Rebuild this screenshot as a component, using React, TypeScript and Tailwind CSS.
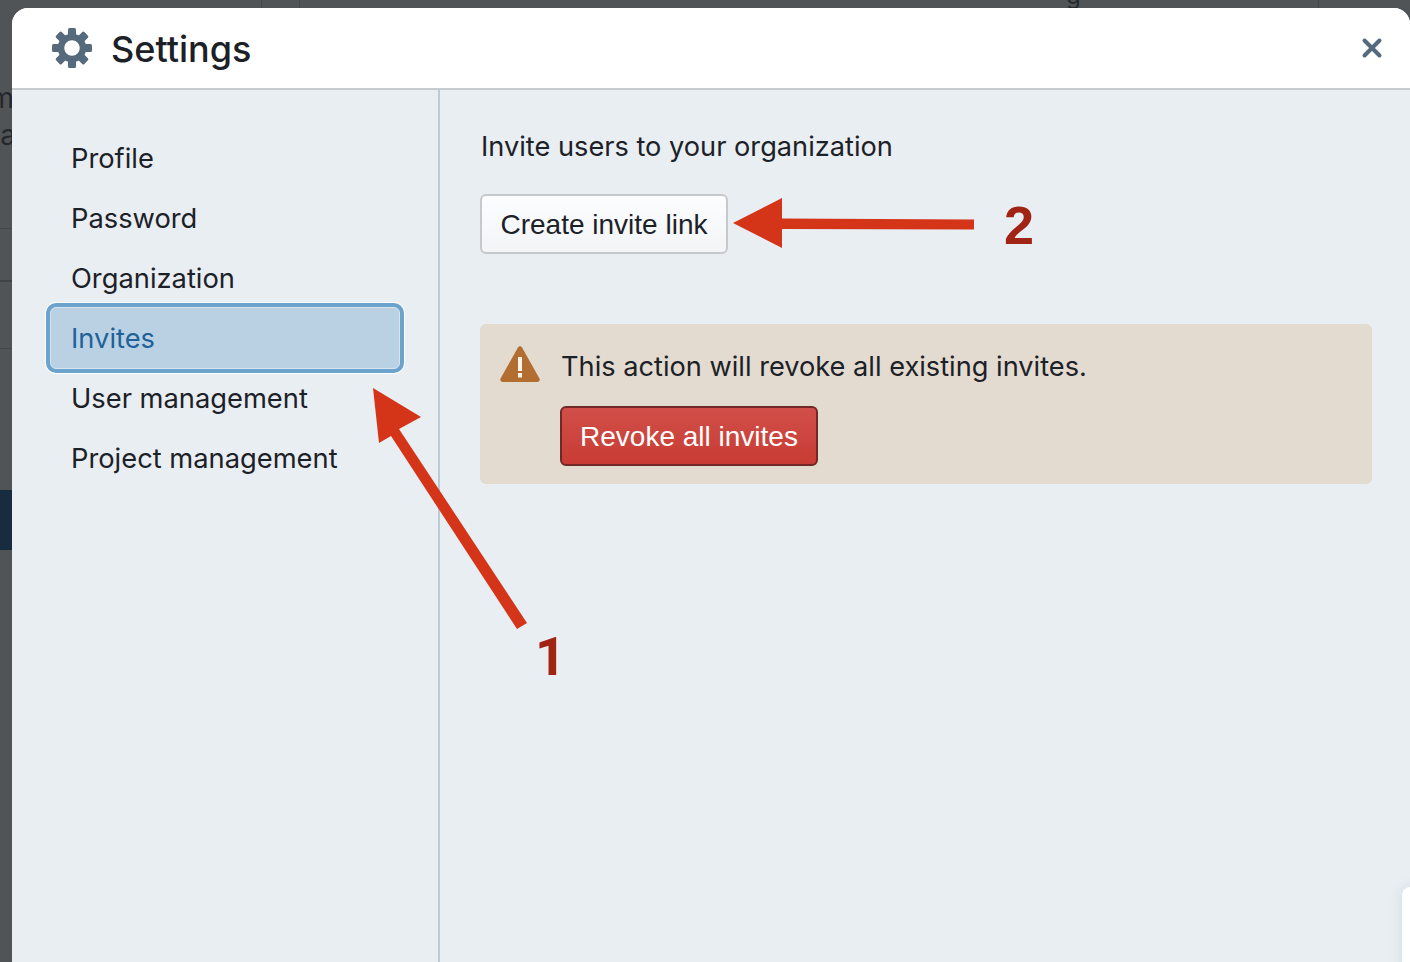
import React from "react";
import { X } from "lucide-react";

const navItems = ["Profile", "Password", "Organization", "Invites", "User management", "Project management"];

function Gear() {
  const angles = [0, 45, 90, 135, 180, 225, 270, 315];
  return (
    <svg width="40" height="40" viewBox="0 0 40 40" className="shrink-0 text-[#566a7d]">
      <circle cx="20" cy="20" r="11" fill="none" stroke="currentColor" strokeWidth="6.500" />
      {angles.map((a) => (
        <rect key={a} x="16" y="0" width="8" height="9" rx="1.500" fill="currentColor" transform={`rotate(${a} 20 20)`} />
      ))}
    </svg>
  );
}

function Nav() {
  return (
    <nav className="w-[428px] shrink-0 border-r-2 border-[#bccad6] pl-[36px] pt-[39px] text-[27.3px]">
      {navItems.map((item) =>
        item === "Invites" ? (
          <div
            key={item}
            className="h-[62px] -mt-[2px] ml-[2px] w-[350px] flex items-center rounded-[6px] bg-[#bad1e4] pl-[20px] pt-[2px] text-[#1f6299] border border-[#d7e3ee] shadow-[0_0_0_4px_#6ba3cd,0_0_0_5px_#ffffff]"
          >
            {item}
          </div>
        ) : (
          <div key={item} className="h-[60px] flex items-center pl-[23px]">{item}</div>
        )
      )}
    </nav>
  );
}

function Arrows() {
  return (
    <svg className="absolute left-0 top-0 pointer-events-none" width="1410" height="962" viewBox="0 0 1410 962">
      <path d="M373 388 L421 417 L399 429 L527 623 L517 629 L391 436 L379 443 Z" fill="#d43519" />
      <path d="M733 223 L782 198 L782 218.500 L974 219.500 L974 229.500 L782 229 L782 248 Z" fill="#d43519" />
    </svg>
  );
}

function LeftStrip() {
  return (
    <div className="w-[12px] shrink-0 overflow-hidden flex flex-col text-[28px] text-[#24282c]">
      <div className="mt-[74px] h-[32px] leading-[32px] flex justify-end -mr-[2px]">m</div>
      <div className="mt-[5px] h-[32px] leading-[32px] flex justify-end -mr-[4px]">a</div>
      <div className="mt-[77px] h-px bg-[#45494c]" />
      <div className="mt-[51px] h-[2px] bg-[#3f4346]" />
      <div className="mt-[66px] h-px bg-[#45494c]" />
      <div className="mt-[141px] h-[60px] bg-[#182b3f]" />
    </div>
  );
}

function TopStrip() {
  return (
    <div className="h-[8px] shrink-0 flex overflow-hidden pl-[261px]">
      <div className="w-px bg-[#44484b]" />
      <div className="w-px bg-[#44484b] ml-[37px]" />
      <div className="w-[9px] ml-[766px] text-[24px] leading-none -mt-[16px] text-[#24282c]">g</div>
      <div className="w-px bg-[#44484b] ml-[243px]" />
    </div>
  );
}

export default function App() {
  return (
    <div className="relative w-[1410px] h-[962px] overflow-hidden bg-[#505457] text-[#1c2127] font-['Inter','Liberation_Sans',sans-serif] flex flex-col">
      <TopStrip />
      <div className="flex flex-1 min-h-0">
        <LeftStrip />
        <div className="flex-1 bg-[#e9eef3] rounded-t-[16px] flex flex-col">
          <header className="h-[82px] shrink-0 bg-white rounded-t-[16px] border-b-2 border-[#c7ccd1] flex items-center pl-[40px] pr-[23px]">
            <Gear />
            <h1 className="ml-[19px] text-[36px] font-medium leading-none pt-[2px]">Settings</h1>
            <X className="ml-auto text-[#566a7d]" size={30} strokeWidth={3.2} />
          </header>
          <div className="flex flex-1 text-[27.2px]">
            <Nav />
            <main className="flex-1 pl-[40px] pr-[38px] pt-[40px]">
              <p className="leading-[34px] pl-px">Invite users to your organization</p>
              <button className="mt-[30px] h-[60px] w-[248px] rounded-[6px] border-2 border-[#c5c9cd] pt-[2px] bg-gradient-to-b from-[#fcfdfe] to-[#f2f4f6] text-[28px] font-['Liberation_Sans',sans-serif] text-[#1c2127] block">
                Create invite link
              </button>
              <section className="mt-[70px] h-[160px] rounded-[6px] bg-[#e3dbd0] flex pl-[20px] pt-[22px]">
                <svg width="40" height="36" viewBox="0 0 40 36" className="shrink-0">
                  <path d="M20 0 Q21 0 22 1.500 L39.500 32.500 Q40.500 35.500 37.500 36 L2.500 36 Q-0.500 35.500 0.500 32.500 L18 1.500 Q19 0 20 0 Z" fill="#b26d30" />
                  <rect x="18" y="11" width="4" height="14" fill="#ffffff" fillOpacity="0.92" />
                  <rect x="18" y="27" width="4" height="4.500" fill="#ffffff" fillOpacity="0.92" />
                </svg>
                <div className="ml-[20px]">
                  <p className="leading-[42px] pl-px">This action will revoke all existing invites.</p>
                  <button className="mt-[18px] h-[60px] w-[258px] rounded-[6px] border-2 border-[#6f2927] pt-[2px] bg-gradient-to-b from-[#d04f48] to-[#c83b34] text-[28px] font-['Liberation_Sans',sans-serif] text-white block">
                    Revoke all invites
                  </button>
                </div>
              </section>
            </main>
          </div>
        </div>
      </div>
      <div className="absolute left-[1402px] top-[887px] w-[20px] h-[90px] bg-white rounded-tl-[8px] shadow-[0_0_14px_rgba(60,80,100,0.12)]" />
      <Arrows />
      <span className="absolute left-[1004px] top-[195px] text-[54px] leading-[60px] font-bold text-[#a02313] font-['Liberation_Sans',sans-serif]">2</span>
      <span className="absolute left-[535px] top-[627px] text-[54px] leading-[60px] font-bold text-[#a02313] font-['Roboto',sans-serif]">1</span>
    </div>
  );
}
